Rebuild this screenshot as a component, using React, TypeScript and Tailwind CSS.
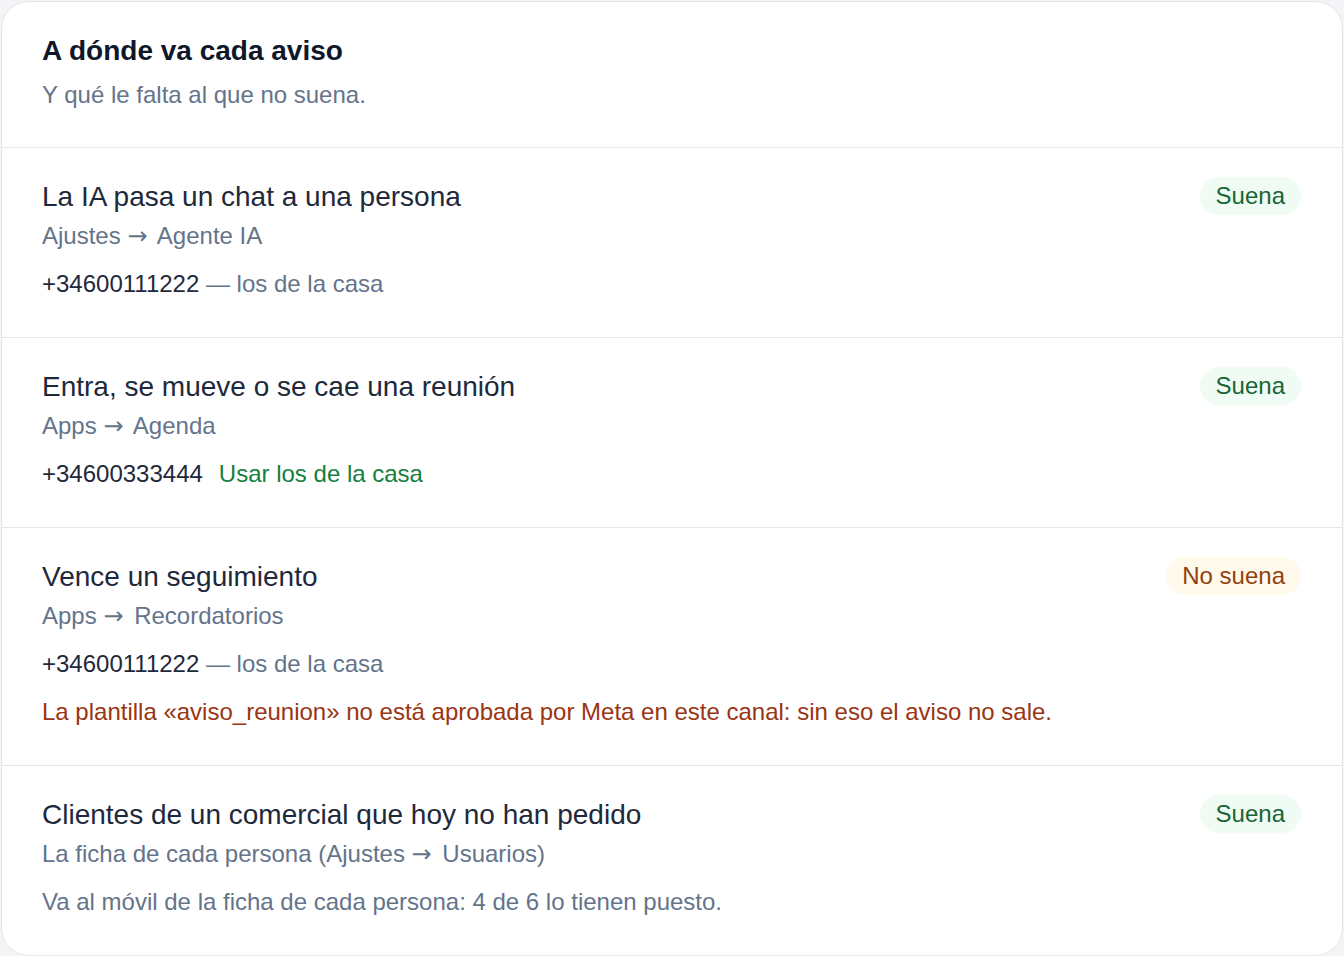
import React from "react";

type Row = {
  title: string;
  where: React.ReactNode;
  ok: boolean;
  line: React.ReactNode;
  warn?: string;
};

const Arrow = () => (
  <span
    className="mr-1 leading-none"
    style={{ fontFamily: '"DejaVu Sans", "Noto Sans", sans-serif' }}
  >
    →
  </span>
);

const rows: Row[] = [
  {
    title: "La IA pasa un chat a una persona",
    where: (
      <>
        Ajustes <Arrow /> Agente IA
      </>
    ),
    ok: true,
    line: (
      <>
        <span className="text-[#1e293b]">+34600111222</span>
        <span className="text-[#64748b]"> — los de la casa</span>
      </>
    ),
  },
  {
    title: "Entra, se mueve o se cae una reunión",
    where: (
      <>
        Apps <Arrow /> Agenda
      </>
    ),
    ok: true,
    line: (
      <>
        <span className="text-[#1e293b]">+34600333444</span>
        <span className="ml-4 text-[#15803d]">Usar los de la casa</span>
      </>
    ),
  },
  {
    title: "Vence un seguimiento",
    where: (
      <>
        Apps <Arrow /> Recordatorios
      </>
    ),
    ok: false,
    line: (
      <>
        <span className="text-[#1e293b]">+34600111222</span>
        <span className="text-[#64748b]"> — los de la casa</span>
      </>
    ),
    warn: "La plantilla «aviso_reunion» no está aprobada por Meta en este canal: sin eso el aviso no sale.",
  },
  {
    title: "Clientes de un comercial que hoy no han pedido",
    where: (
      <>
        La ficha de cada persona (Ajustes <Arrow /> Usuarios)
      </>
    ),
    ok: true,
    line: (
      <span className="text-[#64748b]">
        Va al móvil de la ficha de cada persona: 4 de 6 lo tienen puesto.
      </span>
    ),
  },
];

function Badge({ ok }: { ok: boolean }) {
  return ok ? (
    <span className="flex h-[38px] items-center rounded-full bg-[#effbf3] px-4 text-[24px] leading-none text-[#166534]">
      Suena
    </span>
  ) : (
    <span className="flex h-[38px] items-center rounded-full bg-[#fffaeb] px-4 text-[24px] leading-none text-[#92400e]">
      No suena
    </span>
  );
}

export default function App() {
  return (
    <div
      className="min-h-screen bg-[#f3f4f6] p-px"
      style={{ fontFamily: '"Liberation Sans", Arial, sans-serif' }}
    >
      <div className="overflow-hidden rounded-[28px] border border-[#e5e7eb] bg-white">
        <div className="px-[40px] pt-[28px] pb-[34px]">
          <h1 className="text-[28px] font-bold leading-[42px] text-[#0f172a]">
            A dónde va cada aviso
          </h1>
          <p className="mt-[5px] text-[24px] leading-[36px] text-[#64748b]">
            Y qué le falta al que no suena.
          </p>
        </div>
        {rows.map((r) => (
          <div
            key={r.title}
            className="flex items-start justify-between border-t border-[#e5e7eb] pl-[40px] pr-[41px] pt-[28px] pb-[35px]"
          >
            <div>
              <div className="text-[28px] leading-[42px] text-[#1e293b]">
                {r.title}
              </div>
              <div className="text-[24px] leading-[36px] text-[#64748b]">
                {r.where}
              </div>
              <div className="mt-3 text-[24px] leading-[36px]">{r.line}</div>
              {r.warn && (
                <div className="mt-3 text-[24px] leading-[36px] text-[#9a3412]">
                  {r.warn}
                </div>
              )}
            </div>
            <div className="pt-[1px]">
              <Badge ok={r.ok} />
            </div>
          </div>
        ))}
      </div>
    </div>
  );
}
